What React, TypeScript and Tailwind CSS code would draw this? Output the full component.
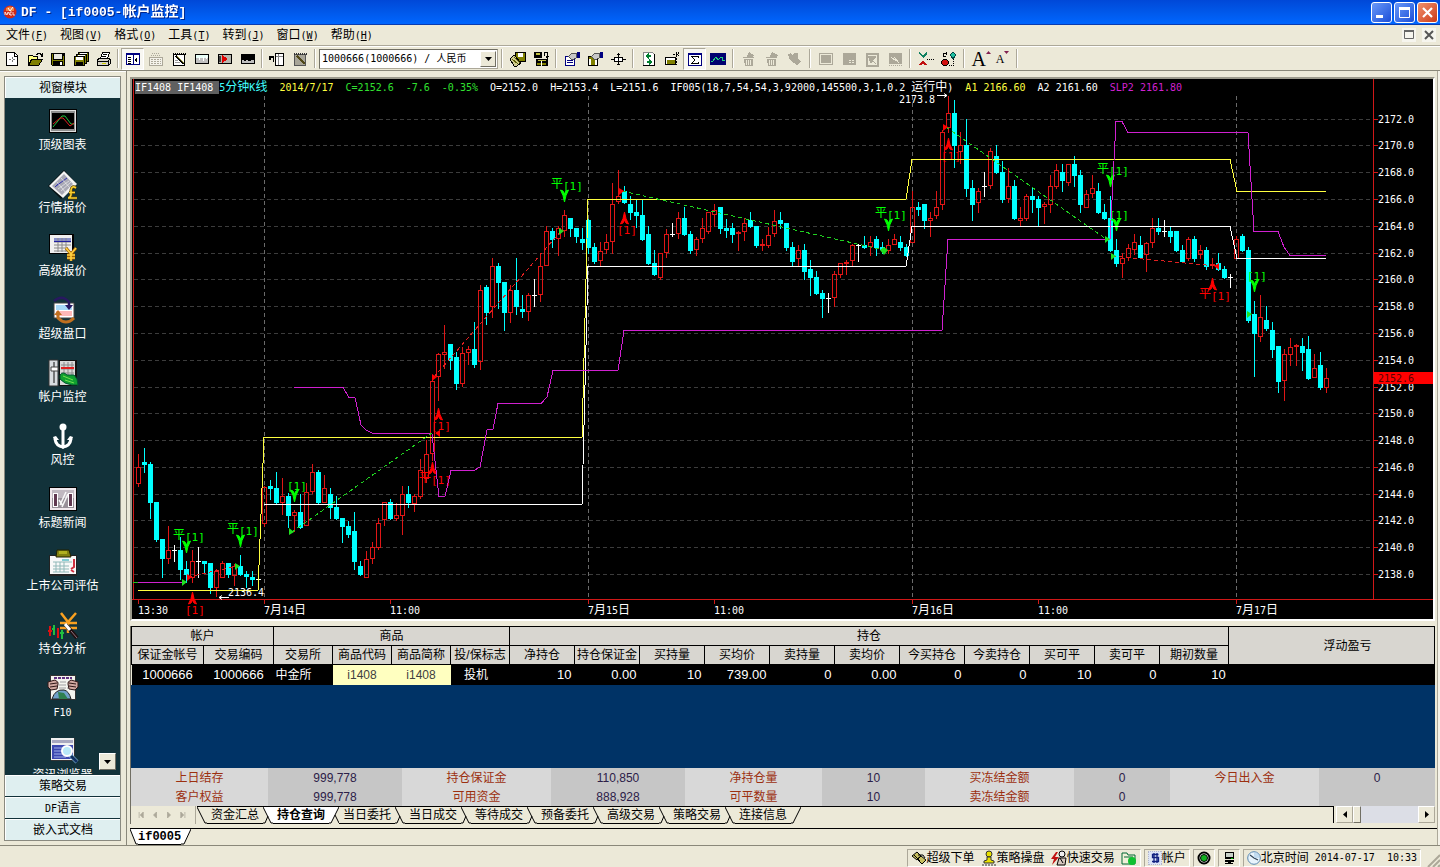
import { Fragment, type ReactNode } from 'react';

type Candle = [kind: number, high: number, top: number, bottom: number, low: number];

// kind: 0 = up (hollow red), 1 = down (solid cyan), 2 = unchanged (white cross)
const candles: Candle[] = [
    [0, 454, 467, 483, 486], [1, 448, 462, 465, 472], [1, 462, 464, 503, 518], [1, 502, 502, 540, 541],
    [1, 539, 539, 559, 577], [0, 526, 550, 558, 563], [2, 545, 550, 550, 561], [1, 537, 550, 570, 579],
    [1, 561, 569, 575, 582], [0, 550, 561, 577, 582], [2, 547, 561, 561, 577], [1, 561, 561, 564, 572],
    [1, 563, 563, 588, 593], [0, 569, 571, 587, 596], [0, 561, 563, 577, 577], [1, 563, 563, 575, 577],
    [0, 564, 566, 575, 585], [1, 555, 566, 575, 575], [1, 571, 574, 577, 587], [1, 571, 577, 580, 585],
    [2, 577, 579, 579, 583], [0, 486, 487, 523, 526], [1, 480, 486, 489, 499], [1, 472, 488, 503, 503],
    [0, 478, 496, 502, 514], [1, 493, 496, 516, 527], [0, 510, 512, 515, 531], [1, 494, 512, 528, 528],
    [0, 483, 492, 525, 525], [0, 464, 472, 491, 493], [1, 470, 472, 503, 503], [0, 475, 488, 502, 502],
    [1, 488, 494, 508, 518], [1, 496, 507, 519, 519], [1, 518, 518, 527, 542], [1, 521, 526, 535, 537],
    [1, 512, 531, 562, 569], [1, 561, 566, 575, 575], [0, 551, 559, 577, 577], [0, 542, 547, 558, 563],
    [0, 518, 523, 547, 549], [0, 502, 502, 519, 525], [1, 499, 502, 519, 519], [0, 503, 515, 518, 520],
    [0, 486, 494, 515, 534], [1, 486, 494, 503, 507], [0, 494, 496, 503, 511], [0, 459, 470, 496, 498],
    [0, 440, 454, 478, 482], [0, 378, 381, 453, 460], [0, 353, 354, 376, 400], [0, 325, 352, 354, 368],
    [1, 344, 344, 361, 369], [1, 352, 357, 384, 389], [0, 347, 353, 383, 386], [0, 346, 349, 352, 364],
    [1, 322, 349, 365, 367], [0, 285, 290, 361, 369], [1, 285, 287, 313, 324], [0, 258, 266, 306, 317],
    [1, 263, 266, 283, 308], [1, 282, 282, 313, 330], [0, 285, 290, 312, 322], [1, 258, 290, 307, 314],
    [1, 295, 309, 312, 317], [0, 293, 295, 311, 320], [2, 279, 295, 295, 306], [0, 253, 266, 294, 301],
    [0, 226, 231, 265, 265], [1, 228, 231, 240, 247], [0, 226, 228, 238, 255], [0, 210, 215, 230, 236],
    [1, 218, 218, 229, 236], [1, 228, 228, 237, 242], [1, 228, 239, 243, 249], [1, 219, 220, 248, 253],
    [1, 243, 247, 262, 263], [0, 242, 251, 260, 265], [0, 234, 242, 249, 253], [0, 183, 204, 241, 253],
    [0, 170, 196, 201, 203], [1, 186, 191, 203, 203], [1, 196, 204, 213, 219], [1, 199, 212, 216, 227],
    [1, 199, 215, 240, 240], [1, 226, 234, 264, 264], [1, 250, 263, 275, 275], [0, 253, 253, 277, 279],
    [0, 229, 234, 252, 257], [2, 223, 234, 234, 236], [0, 212, 218, 233, 238], [1, 207, 218, 235, 235],
    [1, 231, 234, 251, 253], [0, 237, 239, 249, 255], [0, 218, 228, 238, 242], [0, 212, 212, 231, 233],
    [0, 204, 210, 214, 226], [1, 207, 207, 229, 233], [1, 219, 228, 231, 237], [1, 223, 228, 235, 242],
    [0, 231, 232, 233, 250], [0, 218, 223, 231, 240], [1, 212, 220, 227, 227], [1, 226, 226, 246, 247],
    [0, 239, 244, 245, 250], [0, 227, 235, 245, 247], [0, 210, 221, 233, 236], [1, 212, 220, 224, 228],
    [1, 223, 223, 248, 250], [1, 242, 247, 262, 266], [0, 245, 250, 258, 266], [1, 244, 250, 272, 279],
    [1, 260, 269, 278, 295], [1, 271, 277, 294, 294], [1, 290, 293, 299, 317], [2, 293, 298, 298, 312],
    [0, 271, 274, 297, 306], [0, 263, 263, 274, 277], [0, 260, 262, 263, 274], [0, 244, 245, 260, 266],
    [2, 244, 245, 245, 261], [1, 236, 245, 248, 248], [0, 236, 242, 246, 255], [1, 236, 239, 248, 255],
    [1, 242, 247, 250, 253], [0, 239, 245, 250, 253], [0, 234, 239, 244, 244], [1, 236, 242, 248, 250],
    [1, 244, 247, 256, 256], [0, 191, 207, 242, 242], [1, 202, 207, 210, 215], [1, 204, 204, 221, 228],
    [0, 212, 218, 220, 236], [0, 191, 207, 215, 218], [0, 130, 132, 204, 209], [0, 96, 113, 127, 132],
    [1, 100, 113, 146, 167], [0, 132, 145, 151, 163], [1, 119, 145, 189, 196], [1, 180, 188, 205, 220],
    [0, 188, 191, 202, 212], [2, 172, 186, 186, 196], [0, 148, 151, 185, 188], [1, 145, 156, 173, 173],
    [1, 161, 172, 200, 202], [0, 168, 186, 198, 202], [1, 180, 186, 219, 219], [0, 207, 218, 220, 225],
    [0, 194, 196, 218, 220], [1, 188, 196, 200, 212], [1, 196, 199, 208, 226], [0, 202, 204, 206, 223],
    [0, 175, 186, 204, 212], [0, 164, 170, 186, 188], [1, 164, 172, 181, 191], [0, 164, 164, 182, 185],
    [1, 156, 164, 176, 186], [1, 170, 175, 205, 212], [0, 190, 194, 207, 207], [0, 175, 188, 193, 197],
    [1, 183, 191, 213, 213], [1, 204, 212, 219, 219], [1, 196, 218, 251, 251], [1, 239, 250, 264, 266],
    [0, 253, 258, 263, 277], [0, 244, 248, 257, 260], [0, 234, 242, 249, 254], [1, 236, 245, 258, 258],
    [0, 242, 243, 254, 271], [0, 218, 228, 242, 247], [1, 218, 228, 232, 234], [2, 220, 231, 231, 236],
    [1, 227, 231, 237, 242], [1, 231, 231, 251, 251], [1, 245, 250, 262, 262], [0, 237, 239, 258, 260],
    [1, 236, 239, 259, 261], [0, 245, 250, 254, 258], [1, 247, 250, 267, 269], [0, 258, 264, 265, 268],
    [1, 253, 263, 270, 270], [1, 266, 269, 278, 278], [2, 274, 277, 277, 287], [0, 236, 239, 258, 258],
    [1, 234, 236, 251, 251], [1, 247, 250, 321, 322], [1, 301, 314, 334, 376], [0, 295, 317, 336, 341],
    [1, 306, 320, 329, 330], [1, 322, 330, 350, 357], [1, 346, 346, 382, 392], [0, 349, 354, 380, 400],
    [0, 338, 347, 354, 365], [0, 344, 345, 346, 365], [1, 338, 346, 353, 370], [1, 336, 349, 379, 379],
    [0, 354, 368, 377, 377], [1, 352, 365, 388, 389], [0, 368, 378, 387, 392],
];

const priceTicks = [
    [2172, 119], [2170, 145], [2168, 172], [2166, 199], [2164, 226], [2162, 253], [2160, 279], [2158, 306], [2156, 333],
    [2154, 360], [2152, 387], [2150, 413], [2148, 440], [2146, 467], [2144, 494], [2142, 520], [2140, 547], [2138, 574],
];

const timeTicks: [number, string][] = [
    [138, '13:30'], [264, '7月14日'], [390, '11:00'], [588, '7月15日'],
    [714, '11:00'], [912, '7月16日'], [1038, '11:00'], [1236, '7月17日'],
];

// [x of tip, y of tip, has 平 prefix]
const sellSignals: [number, number, boolean][] = [
    [186, 553, true], [240, 547, true], [294, 502, false], [564, 202, true],
    [888, 231, true], [1110, 187, true], [1116, 231, false], [1254, 292, false],
];
const buySignals: [number, number, boolean][] = [
    [192, 592, false], [438, 408, false], [432, 462, true], [624, 212, false], [948, 138, false], [1212, 278, true],
];

const CJK = /([\u3000-\u9fff]+)/;

// Chinese keeps the 12px size, Latin letters and digits are set in a half-width mono
function Txt({ children }: { children: string }) {
    return (
        <>
            {children.split(CJK).map((part, i) =>
                CJK.test(part) ? <Fragment key={i}>{part}</Fragment> : <span key={i} className="text-[10px]">{part}</span>
            )}
        </>
    );
}

function Signal({ x, y, close, up }: { x: number; y: number; close: boolean; up?: boolean }) {
    const color = up ? '#ff0000' : '#00ff00';
    const textY = up ? y + 22 : y - 12;
    return (
        <g fill={color}>
            <path
                d={up
                    ? `M${x + 0.5} ${y}q1 7 4 12q-3 0-4-4q-1 4-4 4q3-5 4-12z`
                    : `M${x + 0.5} ${y}q-1-7-4-12q3 0 4 4q1-4 4-4q-3 5-4 12z`}
                stroke={color}
            />
            {close && <text x={x - 13} y={textY - 2} fontSize="12">平</text>}
            <text x={close ? x - 1 : x - 7} y={textY} fontSize="11">[1]</text>
        </g>
    );
}

function Chart() {
    return (
        <svg viewBox="132 96 1301 523" className="block w-full h-auto overflow-visible" fontFamily="'DejaVu Sans Mono','Noto Sans CJK SC',monospace" role="img" aria-label="IF1408 5分钟K线">
            <g stroke="#3c3c3c" strokeDasharray="4 3" shapeRendering="crispEdges">
                {priceTicks.map(([p, y]) => <line key={p} x1="134" x2="1373" y1={y + 0.5} y2={y + 0.5} />)}
            </g>
            <g stroke="#6a6a6a" strokeDasharray="4 3" shapeRendering="crispEdges">
                {[264, 588, 912, 1236].map(x => <line key={x} x1={x + 0.5} x2={x + 0.5} y1="96" y2="599" />)}
            </g>
            <g stroke="#d01818" shapeRendering="crispEdges">
                <path d="M133.5 79V599M132 599.5H1433M1373.5 79V599" fill="none" />
                {priceTicks.map(([p, y]) => <line key={p} x1="1373" x2="1378" y1={y + 0.5} y2={y + 0.5} />)}
                {timeTicks.map(([x]) => <line key={x} x1={x + 0.5} x2={x + 0.5} y1="600" y2="604" />)}
            </g>
            <g fill="#ffffff" fontSize="10">
                {priceTicks.map(([p, y]) => <text key={p} x="1378" y={y + 4}>{p.toFixed(1)}</text>)}
                {timeTicks.map(([x, label]) => (
                    <text key={x} x={x} y="614">
                        {label.split(CJK).map((part, i) => <tspan key={i} fontSize={CJK.test(part) ? 12 : 10}>{part}</tspan>)}
                    </text>
                ))}
            </g>
            <rect x="1374" y="372" width="59" height="12" fill="#ff0000" />
            <text x="1378" y="382" fontSize="10" fill="#5a0000">2152.6</text>

            <g shapeRendering="crispEdges">
                {candles.map(([kind, high, top, bottom, low], i) => {
                    const x = 138 + i * 6;
                    if (kind === 0) {
                        return (
                            <g key={i}>
                                <path d={`M${x + 0.5} ${high}V${top}M${x + 0.5} ${bottom}V${low + 1}`} stroke="#e01616" />
                                <rect x={x - 1.5} y={top + 0.5} width="4" height={Math.max(1, bottom - top)} fill="none" stroke="#e01616" />
                            </g>
                        );
                    }
                    const color = kind === 1 ? '#00ffff' : '#ffffff';
                    return (
                        <g key={i} fill={color}>
                            <rect x={x} y={high} width="1" height={low - high + 1} />
                            <rect x={x - 2} y={top} width="5" height={Math.max(1, bottom - top)} />
                        </g>
                    );
                })}
            </g>

            {sellSignals.map(([x, y, close]) => <Signal key={x} x={x} y={y} close={close} />)}
            {buySignals.map(([x, y, close]) => <Signal key={x} x={x} y={y} close={close} up />)}

            <g fill="none" shapeRendering="crispEdges">
                <path d="M138 590.5H258L264 437.5H582L588 199.5H906L912 159.5H1230L1237 191.5H1326" stroke="#ffff40" />
                <path d="M264 504.5H582L588 266.5H906L912 226.5H1230L1237 258.5H1326" stroke="#ffffff" />
                <path d="M138 582.5H185M294 387.5H343L349 397.5H355L361 425L366 430L373 433.5H432L439 496.5H445L451 470.5H474L480 467L487 430L493 429L498 403.5H541L547 397L553 370.5H618L624 330.5H942L948 239.5H1110L1116 121.5H1122L1128 132.5H1248L1254 231.5H1278L1284 247L1290 255.5H1326" stroke="#d020d0" />
                <path d="M133 582.5H138" stroke="#20c020" />
                <g strokeDasharray="4 3">
                    <path d="M292 532L432 433M622 191L884 250M946 127L1106 239" stroke="#20d020" />
                    <path d="M188 577L237 566M434 377L561 231M1112 256L1216 266" stroke="#e02020" />
                </g>
            </g>
            <path d="M182 579l5 3l-5 4zM235 563l5 3l-5 4zM289 528l5 4l-5 3zM559 228l5 3l-5 4zM1105 236l5 3l-5 4zM1111 253l5 3l-5 4zM1247 311l5 3l-5 4zM884 247l4 3l-4 5l-4 -5z" fill="#20e020" />
            <path d="M619 188l5 3l-5 4zM943 124l5 3l-5 4zM432 374l5 3l-5 4zM187 574l5 3l-5 4zM1219 263l-5 3l5 4zM440 430l-5 3l5 4z" fill="#ff0000" />

            <g fill="#ffffff" fontSize="10">
                <text x="899" y="103">2173.8</text>
                <text x="228" y="596">2136.4</text>
            </g>
            <path d="M937 95.5H947M944 93.5L947 95.5L944 97.5M229 597.5H219M222 595.5L219 597.5L222 599.5" stroke="#ffffff" fill="none" />
        </svg>
    );
}

const quote: [string, string][] = [
    ['IF1408 IF1408 ', 'bg-[#606060] text-white whitespace-pre'],
    ['5分钟K线', 'text-[#40ffff] mr-3'],
    ['2014/7/17', 'text-[#ffff40] mr-3'],
    ['C=2152.6', 'text-[#30e030] mr-3'],
    ['-7.6', 'text-[#30e030] mr-3'],
    ['-0.35%', 'text-[#30e030] mr-3'],
    ['O=2152.0', 'text-white mr-3'],
    ['H=2153.4', 'text-white mr-3'],
    ['L=2151.6', 'text-white mr-3'],
    ['IF005(18,7,54,54,3,92000,145500,3,1,0.2 运行中)', 'text-white mr-3'],
    ['A1 2166.60', 'text-[#ffff40] mr-3'],
    ['A2 2161.60', 'text-white mr-3'],
    ['SLP2 2161.80', 'text-[#d020d0]'],
];

const toolIcons: Record<string, ReactNode> = {
    新建: <><path d="M2.5 1.5h8l3 3v10h-11z" fill="#fff" stroke="#000" /><path d="M10 2h1v3h3v1h-4z" /><path d="M8 6v2M8 9v2M5 8.5h2M9 8.5h2" stroke="#777" /></>,
    打开: <><path d="M1.5 14V4.500h4l1 1h4v2" fill="#ffff80" stroke="#000" /><path d="M1.500 14.500l3-6h11l-4 6z" fill="#808000" stroke="#000" /><path d="M9 3h1V2h3v1h1v2h1V2" fill="none" stroke="#000" /></>,
    保存: <><path d="M1 2h14v13H2l-1-1z" /><path d="M2 3h1v11H2zM13 5h1v9h-1z" fill="#808000" /><path d="M3 9h10v1H3z" fill="#808000" /><path d="M4 3h8v5H4z" fill="#e8e8e0" /><path d="M10 11h2v3h-2z" fill="#fff" /></>,
    全部保存: <><path d="M5.500 1.500h10v9h-10z" fill="#808000" stroke="#000" /><path d="M7 2h7v3H7z" fill="#fff" /><path d="M3.500 3.500h10v9h-10z" fill="#808000" stroke="#000" /><path d="M5 4h7v3H5z" fill="#fff" /><path d="M1.500 5.500h10v9h-10z" fill="#808000" stroke="#000" /><path d="M3 6h7v3H3z" fill="#fff" /><path d="M3 11h7v3H3z" /></>,
    打印: <><path d="M4.500 7.500l2-6h7l-2 6" fill="#fff" stroke="#000" /><path d="M7 3.500h4M6 5.500h4" stroke="#000" /><path d="M1.500 8.500l2-1h10l1 1v4l-2 2h-11z" fill="#d8d4c8" stroke="#000" /><path d="M2 10.500h10M12.500 10v4M14 8l-2 2" stroke="#000" /><path d="M6 12h4v1H6z" fill="#d0d000" /></>,
    视窗模块: <><path d="M1.500 2.500h13v11h-13z" fill="#fff" stroke="#000080" /><path d="M1 2h14v2H1zM8 3h1v11H8z" fill="#000080" /><path d="M3 6h3M3 8h3M3 10h3M3 12h3" stroke="#000" /><path d="M12 6v6l-3-3z" /></>,
    键盘: <><path d="M1.500 6.500h13v8h-13z" fill="#f4f2ea" stroke="#aca899" /><path d="M3 8.500h10M3 10.500h10M3 12.500h10" stroke="#aca899" strokeDasharray="2 1" /><path d="M3 4.500h10M4 2.500h8" fill="none" stroke="#aca899" strokeDasharray="1 1" /></>,
    记事: <><path d="M2.500 3.500h11v11h-11z" fill="#fff" stroke="#000" /><path d="M2 2.500h13" stroke="#000" strokeWidth="2" strokeDasharray="1 1" /><path d="M5 5l8 8" stroke="#000" strokeWidth="2" /><path d="M6 5l7 7" stroke="#a0a040" /><path d="M4 11.500h5M4 9.500h3" stroke="#999" /></>,
    行情: <><path d="M1.500 3.500h13v9h-13z" fill="#c0c0c0" stroke="#000" /><path d="M2 4h12v3H2z" fill="#e8fff8" /><path d="M5 6h1v3H5zM9 6h1v4H9zM12 5h1v3h-1z" fill="#fff" /></>,
    播放: <><path d="M1.500 3.500h13v9h-13z" fill="#b8b8b0" stroke="#000" /><path d="M5 4v8l6-4z" fill="#e00000" /><path d="M2 5h2v6H2z" fill="#404040" /></>,
    黑板: <><path d="M1 3h14v10H1z" /><path d="M2 9h2v1h2v-1h2v1h3v-1h3v3H2z" fill="#c0c0c0" /></>,
    导入: <><path d="M6.500 2.500h8v12h-8z" fill="#fff" stroke="#000" /><path d="M9.500 3v11M7 5.500h7" stroke="#888" /><path d="M0 5h5v6H4V7H2v2H0z" /></>,
    笔记: <><path d="M2.500 3.500h11v11h-11z" fill="#a8a598" stroke="#555" /><path d="M2 2.500h13" stroke="#333" strokeWidth="2" strokeDasharray="1 1" /><path d="M5 5l8 8" stroke="#504818" strokeWidth="2" /></>,
    存盘: <><path d="M5.500 1.500h10v9h-10z" fill="#808000" stroke="#000" /><path d="M8 2h5v4H8z" fill="#fff" /><path d="M0 8l4-4l7 8l-4 3H4z" fill="#d0cc90" stroke="#000" /><path d="M2 8l6 5M4 6l6 6" stroke="#606000" /></>,
    转存: <><path d="M1 1h8v6H1zM3 8h12v7H3z" /><path d="M3 2h4v2H3zM5 9h8v1H5z" fill="#c0c040" /><path d="M4 12h9v2H4z" fill="#808000" /><path d="M8 10h1v5H8z" fill="#fff" /><path d="M11.500 4.500v-3h3v5M13 5l1.500 2L16 5" fill="none" stroke="#000" /></>,
    属性: <><path d="M1.500 5.500h9v9h-9z" fill="#fff" stroke="#000080" /><path d="M3 9.500h6M3 11.500h6" stroke="#000080" /><path d="M4.500 5.500l3-3h5v4l-3 2h-2z" fill="#c8c8c8" stroke="#555" /><path d="M13 1h3v6h-3z" fill="#000080" /></>,
    格式: <><path d="M1.500 5.500h9v9h-9z" fill="#fff" stroke="#000" /><path d="M4 8h4v6H4zM2 6h8v2H2z" fill="#808000" /><path d="M4.500 5.500l3-3h5v4l-3 2h-2z" fill="#c8c8c8" stroke="#555" /><path d="M13 1h3v6h-3z" fill="#000080" /></>,
    间距: <><path d="M4.500 6.500h8v4h-8z" fill="#fff" stroke="#000" /><path d="M1 8.500h3M13 8.500h3M8.500 2v12M7 3.500h3M7 13.500h3" stroke="#000" /></>,
    刷新: <><path d="M2.500 1.500h9l2 2v11h-11z" fill="#fff" stroke="#888" /><path d="M13.500 3v12M2 14.500h11" stroke="#000" /><path d="M4 5l4-3v2h2v2H8v2zM12 11L8 8v2H6v2h2v2z" fill="#008030" /></>,
    移位: <><path d="M1.500 6.500h10v7h-10z" fill="#fff" stroke="#000" /><path d="M3 9h8v4H3z" fill="#808000" /><path d="M12.500 1v13M14.500 1v4M9 3.500h6" stroke="#000" strokeDasharray="2 1" /></>,
    合计: <><path d="M1.500 2.500h13v12h-13z" fill="#fff" stroke="#000080" /><path d="M1 2h14v2H1z" fill="#000080" /><path d="M11 7V5.500H5l3 3.500l-3 3.500h6V11" fill="none" stroke="#000" /></>,
    走势: <><path d="M0 2h16v12H0z" fill="#000070" /><path d="M1 10h2l3-4l2 3l3-3h1v3h3" fill="none" stroke="#20d080" /></>,
    删除一: <><path d="M3 8h9v7H4zM2 6h11v1H2zM8 1l5 3l-2 3H5z" fill="#aca899" /><path d="M5.500 9v5M7.500 9v5M9.500 9v5" stroke="#ece9d8" /></>,
    删除二: <><path d="M3 8h9v7H4zM2 6h11v1H2zM8 1l6 3l-3 3H5z" fill="#aca899" /><path d="M5.500 9v5M7.500 9v5M9.500 9v5" stroke="#ece9d8" /></>,
    手形: <path d="M1 3l3-1l2 3l1-3h4v6l3 2l-4 5l-3-3l-4-3z" fill="#aca899" />,
    窗口一: <><path d="M1.500 2.500h13v11h-13z" fill="none" stroke="#aca899" /><path d="M3 4h10v8H3z" fill="#aca899" /></>,
    窗口二: <><path d="M2 2h13v12H2z" fill="#aca899" /><path d="M8 9.500h6M8 11.500h6" stroke="#ece9d8" strokeDasharray="2 1" /></>,
    窗口三: <><path d="M2.500 2.500h11v12h-11z" fill="none" stroke="#aca899" strokeWidth="2" /><path d="M4 5h8l-5 7zM9 10l3 3" fill="#aca899" stroke="#aca899" /></>,
    窗口四: <><path d="M2 2h13v11H2z" fill="#aca899" /><path d="M4 6l5 4M7 6l5 6" stroke="#ece9d8" /><path d="M2 14.500h13" stroke="#aca899" strokeDasharray="1 1" /></>,
    买卖: <><path d="M1 1l4 3l4-3v2L5 7L1 3z" fill="#108060" /><path d="M1 14l4-5l4 5H6L5 12l-1 2z" fill="#c01010" /><path d="M9 8.500h7" stroke="#000" strokeDasharray="1 1" /></>,
    信号: <><path d="M2.500 8.500h3l2 2v2l-2 2h-3l-2-2v-2z" fill="#d01010" stroke="#000" /><path d="M5 2.500H2.500v3H5M5 1v3" fill="none" stroke="#000" /><path d="M12 1l3 3l-3 4l-3-4z" fill="#20c0a0" stroke="#044" /><path d="M12.500 8v7M8 14.500h5" stroke="#000" strokeDasharray="1 1" /></>,
};

function Sep({ wide }: { wide?: boolean }) {
    return (
        <span className={`${wide ? 'w-2' : 'w-1.5'} shrink-0 flex justify-center`}>
            <span className="w-0.5 h-[19px] border-l border-[#aca899] bg-white" />
        </span>
    );
}

function Tools({ names, pressed }: { names: string[]; pressed?: string }) {
    return (
        <>
            {names.map(name => (
                <button
                    key={name}
                    aria-label={name}
                    className={`w-[23px] h-[22px] shrink-0 flex items-center justify-center ${name === pressed ? 'bg-[#f8f7f2] border border-[#aca899] border-r-white border-b-white' : ''}`}
                >
                    <svg viewBox="0 0 16 16" className="w-4 h-4" shapeRendering="crispEdges">{toolIcons[name]}</svg>
                </button>
            ))}
        </>
    );
}

const modules: [string, ReactNode][] = [
    ['顶级图表', <><path d="M0 2h28v24H0z" fill="#000" /><path d="M1 3h26v22H1z" fill="#e0e0e0" /><path d="M2 4h24v20H2z" fill="#909090" /><path d="M3 6h22v16H3z" fill="#000" /><path d="M4 20L13 9h3l6 8h3" fill="none" stroke="#20c040" /><path d="M4 17l7-6h3l7 8l4-3" fill="none" stroke="#e02020" /></>],
    ['行情报价', <><path d="M15 0L27 13L12 29L-1 16z" fill="#000" opacity=".7" /><path d="M15 1L28 14L14 28L0 16z" fill="#f4f4f4" /><path d="M15 4L24 14L13 25L3 16z" fill="#a8a8b4" /><path d="M7 16L18 8M6 17l4-4" stroke="#3030b0" /><path d="M9 19L20 11M12 21l10-9M8 12l9 11M12 8l9 10" stroke="#eee" strokeWidth=".7" /><path d="M27 18q-4-3-5 2v5q-1 3-3 3h9M20 22.500h6" fill="none" stroke="#604000" strokeWidth="3" /><path d="M27 18q-4-3-5 2v5q-1 3-3 3h9M20 22.500h6" fill="none" stroke="#f8d030" strokeWidth="1.600" /></>],
    ['高级报价', <><path d="M0 1h25v20H0z" fill="#000" /><path d="M1 2h22v18H1z" fill="#f0f0f0" /><path d="M5 5h17v3H5z" fill="#8890c8" /><path d="M5 9h17M5 12h17M5 15h14M5 18h12M9 5v14M13 5v14M17 5v14" stroke="#888" /><path d="M5 8.500h17" stroke="#2020a0" /><path d="M17 15l5 6l5-6M22 21v7M18 22h8M18 25h8" fill="none" stroke="#a06000" strokeWidth="3" /><path d="M17 15l5 6l5-6M22 21v7M18 22h8M18 25h8" fill="none" stroke="#ffd040" strokeWidth="1.600" /></>],
    ['超级盘口', <><path d="M5 7h20v15H5z" fill="#fff" stroke="#444" /><path d="M7 9h16v5H7z" fill="#a8d8f8" /><path d="M7 15h16v5H7z" fill="#ffb8b8" /><path d="M5 5q8-7 15 1v4" fill="none" stroke="#281860" strokeWidth="2.500" /><path d="M16 9h8l-4 5z" fill="#281860" /><path d="M25 22q-8 8-16 0v-3" fill="none" stroke="#c07020" strokeWidth="3" /><path d="M5 19h8l-4-5z" fill="#c07020" /></>],
    ['帐户监控', <><path d="M0 1h9v26H0z" fill="#d8dce0" stroke="#333" /><path d="M5 3v21" stroke="#111" /><path d="M2 8h7v4H2z" fill="#fff" stroke="#444" /><path d="M10 1h18v26H10z" fill="#111" /><path d="M11 2h15v24H11z" fill="#d8d8d8" /><path d="M12 6h13M12 10h13M12 14h13M15 3v20M19 3v20M23 3v20" stroke="#888" /><path d="M12 9h13" stroke="#e02020" strokeWidth="2" /><path d="M11 16q3-4 7 0h7l3 4l1 6h-6q-8-1-12-6z" fill="#10a030" stroke="#053" /><path d="M14 17l10 4M16 21l9 3" stroke="#70e050" /></>],
    ['风控', <><circle cx="14" cy="5" r="3.500" fill="#fff" /><path d="M14 7v17M6 17q1 7 8 8q7-1 8-8" fill="none" stroke="#fff" strokeWidth="3" /><path d="M4 15l3-1l3 4H5zM24 15l-3-1l-3 4h5zM14 27l-4-3h8z" fill="#fff" /></>],
    ['标题新闻', <><path d="M0 2h28v24H0z" fill="#000" /><path d="M1 3h26v22H1z" fill="#f0e8ec" /><path d="M3 5h22v8H3z" fill="#c0b8c0" /><path d="M3 13h22v10H3z" fill="#989098" /><path d="M4 8h5v14H4zM19 8h5v14h-5z" fill="#fff" /><path d="M5 9h3v12H5zM20 9h3v12h-3z" fill="#603850" /><path d="M11 20l6-13M13 22l6-13M10 15l4 6" stroke="#f8f8f8" strokeWidth="1.500" /></>],
    ['上市公司评估', <><path d="M0 7h28v21H0z" fill="#222" /><path d="M1 8h26v18H1z" fill="#f8f8f8" /><path d="M4 14h19M4 18h16M4 21h16M4 24h16M7 14v10M11 14v10M15 14v10" stroke="#90b8b8" /><path d="M8 2h12l2 7H7z" fill="#808010" stroke="#202000" /><path d="M10 3h8v3h-8z" fill="#b0b020" /><path d="M25 11v8l-3 2M22 22l3 2" fill="none" stroke="#d03040" strokeWidth="2" /><path d="M13 12h7" stroke="#10a0b0" /></>],
    ['持仓分析', <><path d="M12 2l7 9l8-9M19 11v11M11 12h17M11 17h17" fill="none" stroke="#f8a020" strokeWidth="2.500" /><path d="M5 14v10M3 18h3M13 19v9M11 22h4" stroke="#20c040" strokeWidth="2" /><path d="M1 15v10M-1 20h4M9 17v10" stroke="#e01010" strokeWidth="2" /><path d="M17 14l11 13" stroke="#201010" strokeWidth="4" /><path d="M16 13l5 6" stroke="#fff" strokeWidth="3" /><path d="M22 20l6 7" stroke="#907080" strokeWidth="1" /></>],
    ['F10', <><path d="M1 1h26v25H1z" fill="#333" /><path d="M2 2h24v23H2z" fill="#f4f4ee" /><path d="M5 4h18" stroke="#603080" strokeWidth="2" strokeDasharray="3 1" /><path d="M11 8h6M19 8h4M10 11h7M19 11h4M10 14h7M18 14h5" stroke="#bbb" strokeWidth="1.500" /><path d="M3 25q3-10 12-9q5 1 7 9z" fill="#70a0c8" stroke="#222" /><path d="M9 18l6 1l4 6h-9z" fill="#308050" /><path d="M-1 8l7-2q4 2 3 4l-1 5l-6 1l-3-3zM29 8l-7-2q-4 2-3 4l1 5l6 1l3-3z" fill="#d0a8a0" stroke="#301818" /><path d="M1 10l7-1M1 13l7-1M27 10l-7-1M27 13l-7-1" stroke="#301818" /></>],
    ['资讯浏览器', <><path d="M2 1h24v23H2z" fill="#333" /><path d="M2 1h23v22H2z" fill="#f0f0f0" /><path d="M3 3h21v3H3z" fill="#a8a8c0" /><path d="M3 8h21v14H3z" fill="#3c48b0" /><path d="M5 11h9M5 14h8M5 17h9M5 20h12" stroke="#a0b0e8" /><path d="M20 17l8 8" stroke="#80b8d8" strokeWidth="4" /><path d="M22 19l6 6" stroke="#103060" strokeWidth="3" /><circle cx="18" cy="14" r="5" fill="#b8e8f8" stroke="#fff" strokeWidth="2" /></>],
];

function SideButton({ children }: { children: string }) {
    return (
        <button className="h-[21px] shrink-0 bg-[#dfeff0] border-t border-l border-white text-center leading-5">
            <Txt>{children}</Txt>
        </button>
    );
}

function Sidebar() {
    return (
        <aside className="w-[126px] shrink-0 flex flex-col pl-1 pr-[5px] pt-1 pb-1 border-t border-white">
            <div className="flex-1 min-h-0 flex flex-col gap-px bg-[#12323a] border border-[#8a8a80]">
                <SideButton>视窗模块</SideButton>
                <div className="relative flex-1 min-h-0 overflow-hidden pt-2">
                    {modules.map(([name, icon]) => (
                        <button key={name} className="w-full h-[63px] flex flex-col items-center text-white">
                            <svg viewBox="0 0 28 28" className="w-7 h-7 shrink-0 overflow-visible">{icon}</svg>
                            <span className="leading-5 whitespace-nowrap"><Txt>{name}</Txt></span>
                        </button>
                    ))}
                    <button aria-label="向下滚动" className="absolute right-1 bottom-1 w-[17px] h-[17px] flex items-center justify-center bg-[#ece9d8] border border-white border-r-[#716f64] border-b-[#716f64]">
                        <svg viewBox="0 0 7 4" className="w-[7px] h-1"><path d="M0 0h7L3.500 4z" /></svg>
                    </button>
                </div>
                <SideButton>策略交易</SideButton>
                <SideButton>DF语言</SideButton>
                <SideButton>嵌入式文档</SideButton>
            </div>
        </aside>
    );
}

const columns = [
    '保证金帐号', '交易编码', '交易所', '商品代码', '商品简称', '投/保标志', '净持仓', '持仓保证金', '买持量',
    '买均价', '卖持量', '卖均价', '今买持仓', '今卖持仓', '买可平', '卖可平', '期初数量',
];
const position = ['10', '0.00', '10', '739.00', '0', '0.00', '0', '0', '10', '0', '10'];

const summary = [
    ['上日结存', '999,778', '持仓保证金', '110,850', '净持仓量', '10', '买冻结金额', '0', '今日出入金', '0'],
    ['客户权益', '999,778', '可用资金', '888,928', '可平数量', '10', '卖冻结金额', '0', '', ''],
];

function Positions() {
    const head = 'border border-black font-normal p-0 whitespace-nowrap';
    return (
        <table className="w-full table-fixed border-collapse leading-4 shrink-0">
            <colgroup>
                <col className="w-[72px]" />
                <col className="w-[70px]" />
                {[0, 1, 2, 3].map(i => <col key={i} className="w-[59px]" />)}
                {[0, 1, 2, 3, 4, 5, 6, 7, 8, 9].map(i => <col key={i} className="w-[65px]" />)}
                <col className="w-[69px]" />
                <col />
            </colgroup>
            <thead className="bg-[#d8d6d0] font-['Liberation_Sans','Noto_Sans_CJK_SC',sans-serif]">
                <tr className="h-[19px]">
                    <th colSpan={2} className={head}>帐户</th>
                    <th colSpan={4} className={head}>商品</th>
                    <th colSpan={11} className={head}>持仓</th>
                    <th rowSpan={2} className={`${head} pl-8`}>浮动盈亏</th>
                </tr>
                <tr className="h-[19px]">
                    {columns.map(c => <th key={c} className={head}>{c}</th>)}
                </tr>
            </thead>
            <tbody className="bg-black text-white font-['Liberation_Sans','Noto_Sans_CJK_SC',sans-serif]">
                <tr className="h-5 text-[13px]">
                    <td className="p-0 text-center">1000666</td>
                    <td className="p-0 text-center">1000666</td>
                    <td className="p-0 pl-0.5 text-xs">中金所</td>
                    <td className="p-0 text-center text-xs bg-[#ffffc0] text-[#404040]">i1408</td>
                    <td className="p-0 text-center text-xs bg-[#ffffc0] text-[#404040]">i1408</td>
                    <td className="p-0 pr-2 text-center text-xs">投机</td>
                    {position.map((v, i) => <td key={i} className="p-0 pr-[3px] text-right">{v}</td>)}
                    <td />
                </tr>
            </tbody>
        </table>
    );
}

function Summary() {
    return (
        <table className="w-full table-fixed border-collapse shrink-0 leading-4">
            <colgroup>
                <col className="w-[137px]" />
                <col className="w-[134px]" />
                <col className="w-[149px]" />
                <col className="w-[134px]" />
                <col className="w-[137px]" />
                <col className="w-[103px]" />
                <col className="w-[149px]" />
                <col className="w-[96px]" />
                <col className="w-[149px]" />
                <col />
            </colgroup>
            <tbody>
                {summary.map((row, r) => (
                    <tr key={r} className="h-[19px]">
                        {row.map((v, i) => i % 2 === 0
                            ? <th key={i} className="p-0 font-normal bg-[#d8d8d8] text-[#9c3010]">{v}</th>
                            : <td key={i} className="p-0 text-center bg-[#c6c6c6] text-[#2c2048] font-['Liberation_Sans',sans-serif]">{v}</td>
                        )}
                    </tr>
                ))}
            </tbody>
        </table>
    );
}

const sheets = ['资金汇总', '持仓查询', '当日委托', '当日成交', '等待成交', '预备委托', '高级交易', '策略交易', '连接信息'];

function SheetTabs() {
    const active = 1;
    return (
        <div className="h-[18px] shrink-0 flex items-start">
            <div className="w-[65px] h-full shrink-0 flex items-center justify-between pl-1.5 pr-2 border-r border-[#aca899] mr-px">
                {['M1.500 0V8M7 0L3 4L7 8z', 'M6 0L2 4L6 8z', 'M2 0L6 4L2 8z', 'M6.500 0V8M1 0L5 4L1 8z'].map((d, i) => (
                    <button key={d} aria-label={['第一页', '上一页', '下一页', '最后页'][i]}>
                        <svg viewBox="0 0 8 8" className="w-2 h-1.5"><path d={d} fill="#aca899" stroke="#aca899" /></svg>
                    </button>
                ))}
            </div>
            <div className="flex-1 min-w-0 h-full flex border-t border-black" role="tablist">
                {sheets.map((name, i) => (
                    <Fragment key={name}>
                        <svg viewBox="0 0 10 17" className="w-2.5 h-[17px] shrink-0" fill="none">
                            {i === active && <path d="M0 0L8 16H10V0z" fill="#fff" />}
                            {i === active + 1 && <path d="M10 0L2 16H0V0z" fill="#fff" />}
                            {i === active + 1
                                ? <path d="M10 0L2 16H0M6 8L10 16" stroke="#000" />
                                : <path d={i === 0 ? 'M0 0L8 16H10' : 'M0 0L8 16H10M5 9L2 16H0'} stroke="#000" />}
                        </svg>
                        <button
                            role="tab"
                            aria-selected={i === active}
                            className={`w-14 h-[17px] shrink-0 leading-4 border-b border-black whitespace-nowrap ${i === active ? 'bg-white font-bold' : ''}`}
                        >
                            {name}
                        </button>
                    </Fragment>
                ))}
                <svg viewBox="0 0 10 17" className="w-2.5 h-[17px] shrink-0" fill="none"><path d="M10 0L2 16H0" stroke="#000" /></svg>
            </div>
            <div className="w-[102px] h-[17px] shrink-0 flex border-l border-black pl-0.5">
                <button aria-label="向左滚动" className="w-[17px] flex items-center justify-center border border-white border-r-[#aca899] border-b-[#aca899]">
                    <svg viewBox="0 0 4 7" className="w-1 h-[7px]"><path d="M4 0v7L0 3.500z" /></svg>
                </button>
                <span className="w-2 border border-white border-r-[#716f64] border-b-[#716f64]" />
                <span className="flex-1 bg-[#dcdee6]" />
                <button aria-label="向右滚动" className="w-[17px] flex items-center justify-center border border-white border-r-[#aca899] border-b-[#aca899]">
                    <svg viewBox="0 0 4 7" className="w-1 h-[7px]"><path d="M0 0v7L4 3.500z" /></svg>
                </button>
            </div>
        </div>
    );
}

const menus = [['文件', 'F'], ['视图', 'V'], ['格式', 'O'], ['工具', 'T'], ['转到', 'J'], ['窗口', 'W'], ['帮助', 'H']];

const statusButtons: [string, ReactNode][] = [
    ['超级下单', <><path d="M1 6l5-4l4 4l-4 4zM6 9l4-3l5 4l-4 4z" fill="#c8c060" stroke="#000" /><path d="M3 5l6 6M7 5h5l2 3" fill="none" stroke="#000" /></>],
    ['策略操盘', <><circle cx="8" cy="4" r="3" fill="#e8e000" stroke="#333" /><path d="M6 7h4v3l3 1v2H3v-2l3-1z" fill="#e8e000" stroke="#333" /><path d="M1 15h14" stroke="#333" strokeDasharray="2 1" /></>],
    ['快速交易', <><path d="M5 2L0 9h3l-2 6l7-8H4l3-5z" fill="#c01010" /><circle cx="11" cy="4" r="3" fill="#eee" stroke="#000" /><path d="M8 8h7l-1 7H6zM9 8l3 5" fill="#d8c8c0" stroke="#000" /></>],
];

const panel = 'h-[18px] flex items-center border border-[#aca899] border-r-white border-b-white';

export default function App() {
    return (
        <div className="h-screen flex flex-col overflow-hidden bg-[#ece9d8] text-black text-xs leading-4 font-['DejaVu_Sans_Mono','Noto_Sans_CJK_SC',monospace]">
            {/* Title bar */}
            <header className="h-[25px] shrink-0 flex items-center pl-[3px] pr-0.5 gap-1 bg-linear-to-b from-[#0048d8] via-[#0058ea] to-[#0066ff] border-b border-[#0a3cb0]">
                <svg viewBox="0 0 14 14" className="w-3.5 h-3.5">
                    <circle cx="7" cy="7" r="6.500" fill="#d02818" />
                    <path d="M3 3q4-3 8 0v3H3z" fill="#f08040" />
                    <path d="M5 3l2 3l3-4" fill="none" stroke="#fff" />
                    <path d="M2 10V7l2 3l1-3l2 3M9 7H7v3h2M10 7v3h2" fill="none" stroke="#fff" strokeWidth=".8" />
                </svg>
                <h1 className="flex-1 text-white font-bold text-[13px] font-['Liberation_Mono','Noto_Sans_CJK_SC',monospace] drop-shadow-[1px_1px_0_#00268c]">
                    DF - [if0005-<span className="text-sm">帐户监控</span>]
                </h1>
                <div className="flex gap-0.5">
                    <button aria-label="最小化" className="w-[21px] h-[21px] rounded-[3px] border border-white bg-linear-to-br from-[#6a98f8] to-[#1c4cd8]">
                        <svg viewBox="0 0 19 19"><path d="M4 12h7v3H4z" fill="#fff" /></svg>
                    </button>
                    <button aria-label="还原" className="w-[21px] h-[21px] rounded-[3px] border border-white bg-linear-to-br from-[#6a98f8] to-[#1c4cd8]">
                        <svg viewBox="0 0 19 19"><path d="M4.500 5.500h10v9h-10z" fill="none" stroke="#fff" /><path d="M4 4h11v3H4z" fill="#fff" /></svg>
                    </button>
                    <button aria-label="关闭" className="w-[21px] h-[21px] rounded-[3px] border border-white bg-linear-to-br from-[#f0906c] to-[#cc3810]">
                        <svg viewBox="0 0 19 19"><path d="M5 5l9 9M14 5l-9 9" stroke="#fff" strokeWidth="2.200" /></svg>
                    </button>
                </div>
            </header>

            {/* Menu */}
            <nav className="h-[21px] shrink-0 flex items-center border-b border-[#aca899]">
                {menus.map(([label, key]) => (
                    <button key={key} className="px-1.5 whitespace-nowrap">
                        {label}<span className="text-[10px]">(<u>{key}</u>)</span>
                    </button>
                ))}
                <div className="ml-auto flex gap-1.5 pr-1">
                    <button aria-label="还原子窗口" className="w-3.5 h-3.5 bg-[#f6f5ee] flex items-center justify-center">
                        <svg viewBox="0 0 10 10" className="w-2.5 h-2.5"><path d="M.5 1.500h9v7h-9z" fill="none" stroke="#666" /><path d="M0 0h10v2H0z" fill="#666" /></svg>
                    </button>
                    <button aria-label="关闭子窗口" className="w-3.5 h-3.5 bg-[#f6f5ee] flex items-center justify-center">
                        <svg viewBox="0 0 10 10" className="w-2.5 h-2.5"><path d="M1 1l8 8M9 1L1 9" stroke="#555" strokeWidth="2" /></svg>
                    </button>
                </div>
            </nav>

            {/* Toolbar */}
            <div className="h-[25px] shrink-0 flex items-center border-t border-t-white border-b border-b-[#8a887a]">
                <Tools names={['新建', '打开', '保存', '全部保存', '打印']} />
                <Sep />
                <Tools names={['视窗模块', '键盘', '记事', '行情', '播放', '黑板']} pressed="视窗模块" />
                <Sep />
                <Tools names={['导入', '笔记']} />
                <Sep wide />
                <div className="relative w-[179px] h-5 shrink-0 bg-white border border-[#716f64] border-r-[#aca899] border-b-[#aca899]">
                    <select aria-label="帐户" className="appearance-none w-full h-full pl-0.5 pr-5 text-[10px] outline-none">
                        <option>1000666(1000666) / 人民币</option>
                    </select>
                    <span className="pointer-events-none absolute right-px top-px w-4 h-4 flex items-center justify-center bg-[#ece9d8] border border-white border-r-[#716f64] border-b-[#716f64]">
                        <svg viewBox="0 0 7 4" className="w-[7px] h-1"><path d="M0 0h7L3.500 4z" /></svg>
                    </span>
                </div>
                <Sep wide />
                <Tools names={['存盘', '转存']} />
                <Sep wide />
                <Tools names={['属性', '格式', '间距']} />
                <Sep wide />
                <Tools names={['刷新', '移位', '合计', '走势']} pressed="合计" />
                <Sep wide />
                <Tools names={['删除一', '删除二', '手形']} />
                <Sep wide />
                <Tools names={['窗口一', '窗口二', '窗口三', '窗口四']} />
                <Sep wide />
                <Tools names={['买卖', '信号']} />
                <Sep wide />
                <button aria-label="放大字体" className="w-[23px] flex justify-end items-start font-['Liberation_Serif',serif] text-xl leading-5">
                    A<svg viewBox="0 0 5 3" className="w-[5px] h-[3px] mt-0.5"><path d="M0 3h5L2.500 0z" fill="#802050" /></svg>
                </button>
                <button aria-label="缩小字体" className="w-[23px] flex justify-center items-start font-['Liberation_Serif',serif] text-xs leading-6">
                    A<svg viewBox="0 0 5 3" className="w-[5px] h-[3px] mt-1"><path d="M0 0h5L2.500 3z" fill="#802050" /></svg>
                </button>
                <Sep />
            </div>

            <main className="flex-1 min-h-0 flex border-b border-[#8a887a]">
                <Sidebar />
                <section className="flex-1 min-w-0 flex flex-col border-l border-[#8a887a] pl-[3px] pt-1.5">
                    <div className="shrink-0 mr-0.5 border-l-2 border-t-2 border-[#9c9a8c] border-r-2 border-r-white border-b-2 border-b-white bg-black">
                        <div className="h-[17px] flex items-center pl-[3px] whitespace-nowrap">
                            {quote.map(([text, cls]) => <span key={text} className={`leading-3 ${cls}`}><Txt>{text}</Txt></span>)}
                        </div>
                        <Chart />
                    </div>

                    <div className="mt-[5px] mr-0.5 flex-1 min-h-0 flex flex-col border-l border-[#716f64]">
                        <Positions />
                        <div className="flex-1 min-h-0 bg-[#003366]" />
                        <Summary />
                        <SheetTabs />
                    </div>

                    <div className="mt-1 h-[17px] shrink-0 flex border-t border-black">
                        <svg viewBox="0 0 8 16" className="w-2 h-4"><path d="M0 0L6 15H8V0z" fill="#fff" /><path d="M0 0L6 15H8" fill="none" stroke="#000" /></svg>
                        <button className="h-4 leading-4 bg-white border-b border-black font-bold font-['Liberation_Mono',monospace]">if0005</button>
                        <svg viewBox="0 0 10 16" className="w-2.5 h-4"><path d="M10 0L3 15H0V0z" fill="#fff" /><path d="M10 0L3 15H0" fill="none" stroke="#000" /></svg>
                    </div>
                </section>
                <div className="w-[3px] shrink-0 border-l border-[#aca899] bg-[#f4f2e8]" />
            </main>

            {/* Status bar */}
            <footer className="h-[21px] shrink-0 flex items-center justify-end gap-[3px] pt-0.5 whitespace-nowrap">
                <div className={`${panel} px-[3px] gap-1`}>
                    {statusButtons.map(([name, icon]) => (
                        <button key={name} className="flex items-center mr-0.5">
                            <svg viewBox="0 0 16 16" className="w-4 h-4">{icon}</svg>{name}
                        </button>
                    ))}
                    <button aria-label="文件夹">
                        <svg viewBox="0 0 16 16" className="w-4 h-4 block"><path d="M1 3h5l1 2h7v9H1z" fill="#f0f0d8" stroke="#063" /><path d="M3 7h9" stroke="#063" /><circle cx="11" cy="11" r="4" fill="#10c030" /></svg>
                    </button>
                </div>
                <div className={`${panel} px-[3px]`}>
                    <svg viewBox="0 0 14 14" className="w-3.5 h-3.5"><path d="M0 0h14v14H0z" fill="#dce4f8" stroke="#889" strokeDasharray="1 1" /><path d="M10.500 3.500h-6v3h6v4H4M6 2v10M9 2v10" fill="none" stroke="#102080" strokeWidth="1.300" /></svg>
                    帐户
                </div>
                <div className={`${panel} px-[3px]`}>
                    <svg viewBox="0 0 14 14" className="w-3.5 h-3.5"><circle cx="7" cy="7" r="5.500" fill="#fff" stroke="#000" strokeWidth="2" /><circle cx="7" cy="7" r="3.500" fill="#10b020" stroke="#000" /></svg>
                </div>
                <div className={`${panel} px-[3px]`}>
                    <svg viewBox="0 0 14 14" className="w-3.5 h-3.5" shapeRendering="crispEdges"><path d="M3 1h9v7H3zM3 9h9v2H3zM6 11h3v2H6zM3 12h8v1H3z" /><path d="M4 2h7v4H4z" fill="#c8d0c8" /><path d="M9 7h2v1H9z" fill="#0c0" /></svg>
                </div>
                <div className={`${panel} px-[3px]`}>
                    <svg viewBox="0 0 14 14" className="w-3.5 h-3.5"><circle cx="7" cy="7" r="6.300" fill="#e8f4fc" stroke="#5a88b0" /><path d="M3 4l4 3l4 2" fill="none" stroke="#345" strokeWidth="1.200" /><path d="M7 1a6 6 0 0 1 6 6H7z" fill="#a8cce8" opacity=".6" /></svg>
                    <span>北京时间</span>
                    <time className="ml-1.5 mr-3 text-[10px]">2014-07-17</time>
                    <time className="text-[10px]">10:33</time>
                </div>
                <svg viewBox="0 0 16 16" className="w-4 h-4 self-end" stroke="#aca899" strokeWidth="2"><path d="M4 16L16 4M9 16l7-7M14 16l2-2" /></svg>
            </footer>
        </div>
    );
}
